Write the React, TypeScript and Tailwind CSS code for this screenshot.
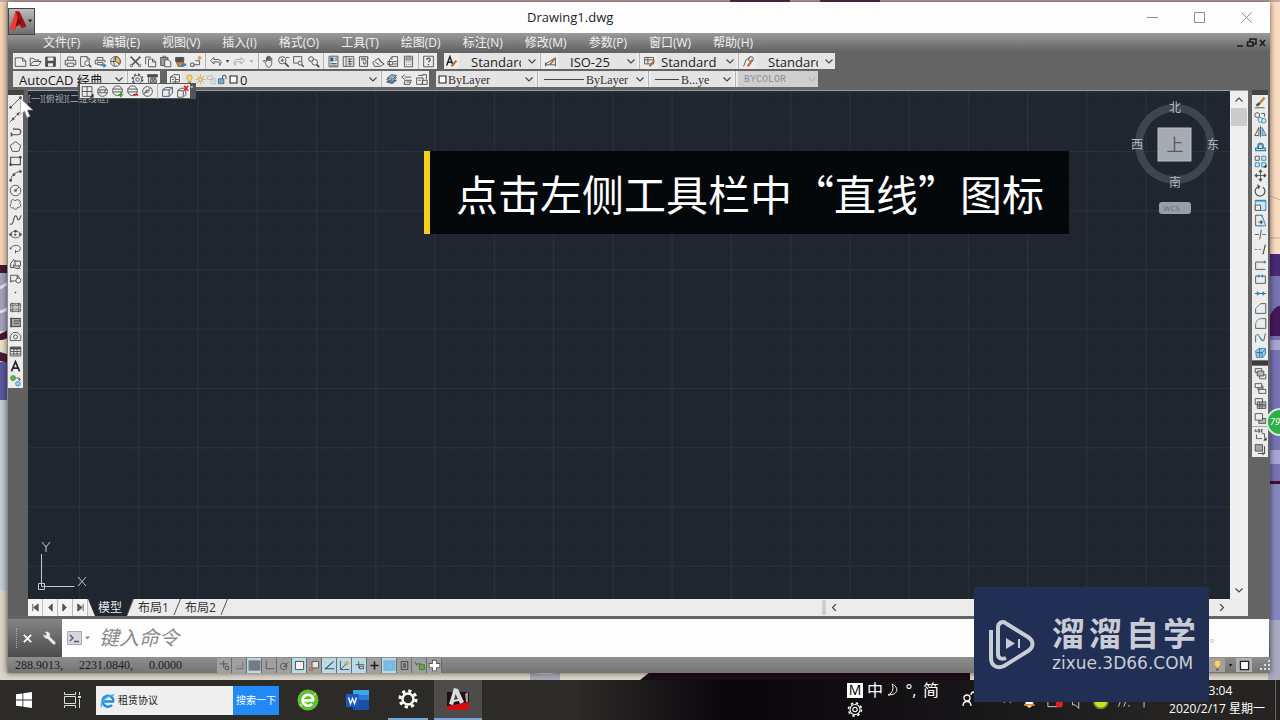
import React, { useState } from "react";
import clsx from "clsx";

const ink = "#4f4f4f";
const blue = "#2f86b8";

// every toolbar glyph is drawn on a 16x16 box
const glyphs: Record<string, React.ReactNode> = {
  new: <path d="M1.5 3.5h9l4 4v6.5h-13zM10.5 3.5v4h4" />,
  open: <path d="M1.5 13V4h4l1.5 2h5v2M1.5 13l3.5-5h10l-3.5 5z" />,
  save: (
    <>
      <path d="M2 2.5h12v11.5H2z" fill={ink} />
      <path d="M4.5 3h7v4h-7zM5 10h6v4H5z" fill="#eee" stroke="none" />
    </>
  ),
  print: <path d="M4.5 6V2.5h7V6M3.5 12H1.5V6.5h13V12h-2M4 10h8v4H4z" />,
  preview: (
    <>
      <path d="M7 14H2V2h8l3 3v2M10 2v3h3" />
      <circle cx="10" cy="10" r="3" />
      <path d="M12 12l3 3" strokeWidth="2" />
    </>
  ),
  publish: (
    <>
      <path d="M4 6V3h7v3M3 11H1.500V6.500h12V9M4 9h7v3H4z" />
      <path d="M8 13h6M12 11l3 2-3 2z" stroke={blue} fill={blue} />
    </>
  ),
  globe: (
    <>
      <circle cx="8" cy="8" r="6" />
      <path d="M8 8V2a6 6 0 0 1 5 9z" fill="#e6c24a" />
      <path d="M2 8h6M8 14c-3-3-3-9 0-12" />
    </>
  ),
  cut: (
    <>
      <path d="M2 2l10 10M14 2L4 12" strokeWidth="1.8" />
      <circle cx="3" cy="13" r="1.500" />
      <circle cx="13" cy="13" r="1.500" />
    </>
  ),
  copy: <path d="M2 11.500v-9h6.500M5.500 5h5l4 3.500V14.500h-9zM10.500 5v3.500h4" />,
  paste: (
    <>
      <path d="M2 3h9v10H2z" fill="#9a9a9a" />
      <path d="M5 1.500h3v2H5zM7 6h5l2.500 2.500v6H7z" fill="#eee" />
    </>
  ),
  match: (
    <>
      <path d="M2 3h10v5H2z" fill={ink} />
      <path d="M3 9h9v5H5z" fill="#c58a4f" stroke="#8a5b2c" />
      <path d="M9 12h6" stroke={blue} strokeWidth="3" />
    </>
  ),
  block: (
    <>
      <path d="M2 14v-4h4v4zM6 12h7V7H8" />
      <path d="M13 1v5M10.500 3.500h5M11 2l4 3M15 2l-4 3" stroke="#e09b2d" />
    </>
  ),
  undo: <path d="M6 3L2 7l4 4V8.500h5c2 0 3 1.500 2 4.500 3-3 2-7.500-2-7.500H6z" />,
  redo: (
    <path
      stroke="#a5a5a5"
      d="M10 3l4 4-4 4V8.500H5c-2 0-3 1.500-2 4.500-3-3-2-7.500 2-7.500h5z"
    />
  ),
  pan: (
    <path d="M4.500 10L1.500 7.500l1-1 3 1.500V3h1.500v4-5.500h1.500V7 2h1.500v5.500V4H12v6c0 3-2 5-4 5s-3-2-3.500-5z" />
  ),
  zoomRt: (
    <>
      <circle cx="6.500" cy="6.500" r="4.500" />
      <path d="M10 10l4.500 4.500" strokeWidth="2.200" />
      <path d="M4.500 6.500h4M6.500 4.500v4M11 3h4" />
    </>
  ),
  zoomWin: (
    <>
      <path d="M2 2h10v8H2z" />
      <circle cx="10" cy="10" r="2.500" fill="#eee" />
      <path d="M12 12l2.500 2.500" strokeWidth="2" />
    </>
  ),
  zoomPrev: (
    <>
      <circle cx="5" cy="5" r="3" />
      <circle cx="9.500" cy="9" r="3.500" fill="#eee" />
      <path d="M12 12l3 3" strokeWidth="2.200" />
    </>
  ),
  props: (
    <>
      <path d="M2.500 1.500h11v13h-11z" />
      <path d="M4 3h4v5H4z" fill="#2d5f9e" stroke="none" />
      <path d="M9.500 4h3M9.500 6.500h3M4 10.500h8M4 12.500h8" />
    </>
  ),
  dc: <path d="M1.500 2h13v12h-13zM5 2v12M7 5h6M7 8h6M7 11h6M9.500 4v9" />,
  palette: <path d="M3 2h10v12H3zM5 4h6M5 6h6v5H8V8M13 3l1.500 1" />,
  sheet: <path d="M1 9l7-5 2 4 5 3-5 3H3zM8 4l5 6M4 9l5 3" />,
  markup: <path d="M3 6l3-4h7v12H3zM6 2v4M1 8h6v4H1zM8 8h4M8 11h4" />,
  calc: <path d="M3 1.500h10v13H3zM5 3.500h6v2.500H5zM5 8.500h1M8 8.500h1M10.500 8.500h1M5 11.500h1M8 11.500h1M10.500 11.500h1" />,
  help: (
    <>
      <path d="M2 1.500h12v13H2z" />
      <path d="M6 6c0-3 4.500-2.500 4 0 0 1.200-2 1.500-2 3M8 11v1.500" strokeWidth="1.600" />
    </>
  ),
  textStyle: (
    <>
      <path d="M2 13L6 2l4 11M3.500 9h5" strokeWidth="1.800" stroke="#222" />
      <path d="M8 14l6-7" stroke="#b36b3a" strokeWidth="2.500" />
    </>
  ),
  dimStyle: (
    <>
      <path d="M1 12h13M2 9v5M14 3v11M2 11l11-7" />
      <path d="M7 12l7-8" stroke="#b36b3a" strokeWidth="2.200" />
    </>
  ),
  tableStyle: (
    <>
      <path d="M2 3h11v8H2zM2 6h11M6 3v8" />
      <path d="M8 14l6-7" stroke="#b36b3a" strokeWidth="2.500" />
    </>
  ),
  leader: (
    <>
      <path d="M2 14l3-8 5-3" />
      <circle cx="11" cy="5" r="3" />
      <path d="M7 14l6-8" stroke="#b36b3a" strokeWidth="2.500" />
    </>
  ),
  gear: (
    <>
      <circle cx="8" cy="8" r="2.200" />
      <circle cx="8" cy="8" r="5" />
      <circle cx="8" cy="8" r="6.500" strokeDasharray="2.500 2.600" strokeWidth="1.600" />
    </>
  ),
  wsGear: (
    <>
      <path d="M2 2h12v3H2z" fill={ink} />
      <circle cx="9" cy="10" r="4" fill="#aaa" />
      <path d="M3 6v8M6 6l7 8M12 6l-7 8" />
    </>
  ),
  layers: <path d="M3 5l4-3h7v9H7M3 5h6v9H3zM5 8h2M5 11h2M9 8h4" />,
  layerStack: (
    <>
      <path d="M2 11l5-3 7 1-5 4z" fill="#4f86b5" />
      <path d="M2 8l5-3 7 1-5 4z" fill="#cfe1ee" />
      <path d="M3 6l5-4 6 1-5 5z" fill="#8fb8d6" />
    </>
  ),
  layerPrev: <path d="M6 5h8M6 9h8l-2 5H5zM6 2L2 5l4 3M8 11h4" />,
  layerState: <path d="M4 3h6M2 6h8l-1 8H2zM9 2h5v6M9 9h6v5H9zM4 9h3" />,
  bulb: (
    <>
      <path d="M8 1.500a4 4 0 0 0-2 7.500v2h4V9a4 4 0 0 0-2-7.500z" fill="#f6d679" stroke="#c79a35" />
      <path d="M6.500 13h3" strokeWidth="2" />
    </>
  ),
  sun: (
    <>
      <circle cx="8" cy="8" r="3" fill="#f6d679" stroke="#c9942b" />
      <path d="M8 1v2.500M8 12.500V15M1 8h2.500M12.500 8H15M3 3l2 2M11 11l2 2M13 3l-2 2M5 11l-2 2" stroke="#c9942b" />
    </>
  ),
  vpFreeze: <path d="M2 3h8v5H2zM7 7h7v7H7zM9 10h3" stroke="#b5b5b5" />,
  lock: (
    <>
      <path d="M2 7h8v7H2z" fill="#7fa9cf" stroke="#2d5f8a" />
      <path d="M8 7V4c0-3 5-3 5 0v3" stroke="#2d5f8a" strokeWidth="1.600" />
    </>
  ),
  swatch: <path d="M3 3h10v10H3z" fill="#fff" stroke="#222" strokeWidth="1.600" />,
  // draw toolbar
  line: (
    <>
      <path d="M2 14L14 2" />
      <path d="M1 13h2v2H1zM13 1h2v2h-2z" fill={ink} />
    </>
  ),
  xline: (
    <>
      <path d="M1 15L15 1" strokeDasharray="5 1.500" />
      <path d="M4 10h2v2H4zM10 4h2v2h-2z" fill={ink} />
    </>
  ),
  pline: <path d="M2 12h9a3.500 3.500 0 0 0 0-7H7M2 9.500L4.500 12 2 14M6 3.500v3" strokeWidth="1.400" />,
  polygon: <path d="M8 2l6.500 4.800L12 14H4L1.500 6.800z" />,
  rect: (
    <>
      <path d="M2 4h12v9H2z" strokeWidth="1.400" />
      <path d="M1 12h2v2H1zM13 3h2v2h-2z" fill={ink} />
    </>
  ),
  arc: (
    <>
      <path d="M2 14C3 8 7 4 14 3" />
      <path d="M1 13h2v2H1zM5 6h2v2H5zM13 2h2v2h-2z" fill={ink} />
    </>
  ),
  circle: (
    <>
      <circle cx="8" cy="8" r="6.500" />
      <path d="M8 8l4-4M7 7h2v2H7z" />
    </>
  ),
  cloud: <path d="M7.500 3.500c-2-3-7-1-4.500 3-3 2-1 7 2.500 5.500 2 3.500 5 2 5-.5 4 1 5-3.500 2.500-5C16 3 10 .5 7.500 3.500z" />,
  spline: <path d="M1 13c3 3 4-2 5-6s3-5 4-1 3 3 5-3" strokeWidth="1.300" />,
  ellipse: (
    <>
      <ellipse cx="8" cy="8" rx="6" ry="4" />
      <path d="M1 7h2v2H1zM7 3h2v2H7zM13 7h2v2h-2zM7 7.500h1.500v1.500H7z" fill={ink} />
    </>
  ),
  ellArc: <path d="M2 9C1 4 14 2 14 8c0 3-3 4-6 4M8 10v4M3 7L2 9l-1-2" />,
  insert: <path d="M2 8l4-5 3 3M2 8v5h4V9M7 5h7v6H8zM11 11l3 3M5 10l3 4h5" strokeWidth="1.200" />,
  makeBlock: (
    <>
      <path d="M2 4h9v7H2z" />
      <circle cx="11.500" cy="10.500" r="3" fill="#eee" />
      <path d="M1 12h3M9 6h4" />
    </>
  ),
  point: <path d="M7.500 7.500h1v1h-1z" fill={ink} />,
  hatch: <path d="M2 3h12v10H2zM1 5h14M1 11h14M4 2v12M12 2v12M4 11l8-7M4 8l4-4M8 11l4-4" strokeWidth=".9" />,
  gradient: (
    <>
      <path d="M2 3h12v10H2z" fill="#a2a2a2" />
      <path d="M1 3h14M1 13h14M3 2v12M6 6h8M6 9h6" />
    </>
  ),
  region: (
    <>
      <path d="M1.500 13V7l4-4h5l4 4v6z" />
      <circle cx="8" cy="8.500" r="2.500" />
    </>
  ),
  table: (
    <>
      <path d="M1.500 2.500h13v11h-13zM1.500 8h13M1.500 11h13M6 5v8M10 5v8" />
      <path d="M2 3h12v2H2z" fill={ink} />
    </>
  ),
  mtext: <path d="M3 14L8 2l5 12M5 10h6" stroke="#222" strokeWidth="2" />,
  addSel: (
    <>
      <circle cx="5" cy="5" r="3" fill="#6bb04c" stroke="#4c8433" />
      <circle cx="11" cy="12" r="2.800" fill="#9fd0ec" stroke={blue} />
      <path d="M9 5h4v3M11.500 6.500L13 8l1.500-1.500" />
    </>
  ),
  // modify toolbar
  erase: (
    <>
      <path d="M5 11L13 2" stroke="#c48a3f" strokeWidth="3" />
      <path d="M3 12l4-3" strokeWidth="3" />
      <path d="M1 14.500h12" />
    </>
  ),
  copyObj: (
    <>
      <circle cx="4" cy="5" r="3" />
      <circle cx="8" cy="11" r="3" stroke={blue} />
      <circle cx="12" cy="12" r="2.800" stroke={blue} fill="#cde6f3" />
      <path d="M9 3h4v4" />
    </>
  ),
  mirror: (
    <>
      <path d="M6 3v10H1z" />
      <path d="M10 3v10h5z" stroke={blue} fill="#9fcbe3" />
      <path d="M8 1v14" />
    </>
  ),
  offset: (
    <>
      <path d="M2 13h12v-3h-3c3-8-9-8-6 0H2z" stroke={blue} fill="#cde6f3" strokeWidth="1.600" />
      <path d="M5.500 10.500h5C12 4 4 4 5.500 10.500z" />
    </>
  ),
  array: (
    <>
      <path d="M1.500 1.500h5v5h-5z" />
      <path d="M9.500 1.500h5v5h-5zM1.500 9.500h5v5h-5zM9.500 9.500h5v5h-5z" stroke={blue} fill="#cde6f3" />
      <path d="M15 12v3h-3z" fill="#222" />
    </>
  ),
  move: (
    <path d="M8 1v14M1 8h14M6 3.500L8 1l2 2.500zM6 12.500L8 15l2-2.500zM3.500 6L1 8l2.500 2zM12.500 6L15 8l-2.500 2z" fill={ink} />
  ),
  rotate: <path d="M6 3a6 6 0 1 0 5 1M4 1l3 2-2 3" strokeWidth="1.400" />,
  scale: (
    <>
      <path d="M1.500 2h13v12h-13z" stroke={blue} fill="#cde6f3" />
      <path d="M1.500 7.500H8V14H1.500z" fill="#eee" />
      <path d="M1.500 2h13" stroke={blue} strokeWidth="2" />
    </>
  ),
  stretch: (
    <>
      <path d="M2 1.500h8v13H2z" />
      <path d="M10 2l4.500 12.500H6" stroke={blue} fill="#cde6f3" />
      <path d="M5 10h5M8.500 8l2 2-2 2z" fill={ink} />
    </>
  ),
  trim: (
    <>
      <path d="M1 8h5M9 2L7 14" />
      <path d="M10 8h5" stroke={blue} />
    </>
  ),
  extend: (
    <>
      <path d="M1 8h3M6 8h3" stroke={blue} />
      <path d="M14 2l-3 12" strokeWidth="1.400" />
    </>
  ),
  breakPt: (
    <>
      <path d="M2 14V5h9M2 14h12" />
      <path d="M12 4h2v2h-2z" fill={blue} stroke={blue} />
    </>
  ),
  breakIt: (
    <>
      <path d="M6 5H2v9h12V5h-4" />
      <path d="M5 4h2v2H5zM9 4h2v2H9z" fill={blue} stroke={blue} />
    </>
  ),
  join: (
    <>
      <path d="M1 8h14" />
      <path d="M4 6l3 2-3 2zM12 6L9 8l3 2z" fill={blue} stroke={blue} />
    </>
  ),
  chamfer: (
    <>
      <path d="M2 8v6h12.500V2H8" />
      <path d="M2 8l6-6" stroke={blue} />
    </>
  ),
  fillet: (
    <>
      <path d="M2 10v4h12.500V2H10" />
      <path d="M2 10c0-5 3-8 8-8" stroke={blue} />
    </>
  ),
  blend: (
    <>
      <path d="M2 14V6l2-2M12 12l2-9" />
      <path d="M4 4c3 0 3 8 8 8" stroke={blue} strokeWidth="1.400" />
    </>
  ),
  explode: (
    <>
      <path d="M2 6l4-3h8v7l-3 4H3z" stroke={blue} fill="#9fcbe3" />
      <path d="M3 8h7v5M10 8l4-4M7 3v10" stroke="#1d6d9c" />
    </>
  ),
  front: (
    <>
      <path d="M1.500 2h8v5h-8zM7 9.500h7.500v5H7z" />
      <path d="M4 5h8v6H4z" fill="#b5b5b5" />
    </>
  ),
  back: (
    <>
      <path d="M5 5h6v5H5z" fill="#b5b5b5" />
      <path d="M1.500 2h8v5h-8zM6 9h8.500v5H6z" fill="#eee" />
    </>
  ),
  above: (
    <>
      <path d="M1.500 2h9v7h-9z" />
      <path d="M4 6h10.500v8H4zM4 9h10M4 11h10M7 6v8M10 6v8" fill="#c9c9c9" />
    </>
  ),
  under: (
    <>
      <path d="M6 8h8.500v6H6z" fill="#b5b5b5" />
      <path d="M1.500 2h9v8h-9z" fill="#eee" />
    </>
  ),
  textFront: (
    <>
      <path d="M1 5l1-3 1 3M5 2v3h2V2zM11 2H9v3h2" strokeWidth="1.200" />
      <path d="M3 8v5h7M10 7h3v6" />
      <path d="M15 12v3h-3z" fill="#222" />
    </>
  ),
  hatchBack: (
    <>
      <path d="M1.500 2h9v8h-9z" fill="#a5a5a5" />
      <path d="M13 4v9h-2M5 13h6M11 11v4" strokeWidth="1.300" />
    </>
  ),
  // viewport toolbar
  vports: (
    <>
      <path d="M1.500 2h12v12h-12zM7.500 2v12M1.500 8h12" />
      <path d="M15 11v4h-4z" fill="#222" />
    </>
  ),
  sphere: (
    <>
      <circle cx="8" cy="8" r="6" />
      <path d="M2 6h12M2 9.500h12M5 6v3M11 6v3" />
    </>
  ),
  sphereAdd: (
    <>
      <circle cx="8" cy="7" r="6" />
      <path d="M2 5h12M2 8.500h12" />
      <path d="M9 12h6M12 9v6" stroke="#3d9b35" strokeWidth="2" />
    </>
  ),
  sphereSub: (
    <>
      <circle cx="8" cy="7" r="6" />
      <path d="M2 5h12M2 8.500h12" />
      <path d="M9 12h6" stroke="#c22" strokeWidth="2.200" />
    </>
  ),
  sphereCut: (
    <>
      <circle cx="8" cy="8" r="6" />
      <path d="M3 12l9-9M5 7h6M4 9h5" />
    </>
  ),
  cube: <path d="M2 6l4-3h8v7l-4 4H2zM2 6h8v8M10 6l4-3" stroke="#3f4e66" />,
  cubeDel: (
    <>
      <path d="M2 7l4-3h6v8l-3 3H2zM2 7h7v7" />
      <path d="M10 1l5 6M15 1l-5 6" stroke="#d22" strokeWidth="2" />
    </>
  ),
  // status bar
  infer: <path d="M7 2v9M2 6h10M9 9h4v4H9z" />,
  snap: <path d="M3 12h9V4M5 9h1M8 9h1" stroke="#666" />,
  grid: <path d="M1 2h14v12H1z" fill="#77797f" stroke="#8d8f96" />,
  ortho: <path d="M4 2v10h10" stroke="#555" />,
  polar: (
    <>
      <circle cx="7" cy="9" r="4" />
      <path d="M7 9l6-5M7 9h4" />
    </>
  ),
  osnap: <path d="M3 3h10v10H3z" fill="#f5f5f5" strokeWidth="1.200" />,
  osnap3d: (
    <>
      <path d="M5 3h8v8H5z" fill="#e5e5e5" />
      <path d="M2 11h4v3H2z" stroke="#b06030" />
    </>
  ),
  otrack: <path d="M13 3L3 12h11" strokeWidth="1.300" />,
  ducs: (
    <>
      <path d="M3 2v11h11M3 13l7-7" />
      <path d="M11 2v6M8 5h6" stroke="#e09b2d" strokeWidth="1.500" />
    </>
  ),
  dyn: <path d="M7 3v8M3 7h11M8 9h5v3H8z" />,
  lwt: <path d="M8 3v10M3 8h10" strokeWidth="2" stroke="#222" />,
  transp: <path d="M1 2h14v12H1zM4 4h8v8H4z" fill="#7ec0e6" stroke="#5aa5d0" strokeDasharray="1 1" />,
  qp: <path d="M4 3h8v10H4zM7 6h2v4H7z" strokeWidth="1.300" />,
  cycle: (
    <>
      <path d="M2 3l3 5M4 6h6" />
      <path d="M8 7h6v6H8z" fill="#69a94e" stroke="#3f7a2a" />
    </>
  ),
  monitor: (
    <>
      <path d="M8 1v14M1 8h14" strokeWidth="6" />
      <path d="M8 2v12M2 8h12" stroke="#fff" strokeWidth="4" />
    </>
  ),
};

function Glyph({ name, className = "h-[13px] w-[13px]" }: { name: string; className?: string }) {
  return (
    <svg viewBox="0 0 16 16" className={className} fill="none" stroke={ink} strokeWidth="1.100">
      {glyphs[name]}
    </svg>
  );
}

function Chevron({ className }: { className?: string }) {
  return (
    <svg viewBox="0 0 8 5" className={clsx("h-[5px] w-2", className)} fill="none" stroke="currentColor" strokeWidth="1.100">
      <path d="M.5.5L4 4 7.500.5" />
    </svg>
  );
}

const Tool = ({ name }: { name: string }) => (
  <button aria-label={name} className="flex h-4 w-[15px] shrink-0 items-center justify-center hover:bg-sky-100">
    <Glyph name={name} />
  </button>
);

const Sep = () => <span className="mx-[2px] h-4 w-px shrink-0 bg-[#b4b4b4]" />;

const VTool = ({ name }: { name: string }) => (
  <button aria-label={name} className="flex w-full flex-1 items-center justify-center hover:bg-sky-100">
    <Glyph name={name} />
  </button>
);

function Combo({ label, value, className, selectClass, disabled, children }: {
  label: string;
  value: string;
  className: string;
  selectClass: string;
  disabled?: boolean;
  children?: React.ReactNode;
}) {
  return (
    <div className={clsx("relative flex h-4 shrink-0 items-center", disabled ? "bg-[#cfcfcf]" : "bg-[#e4e4e4]", className)}>
      {children}
      <select
        aria-label={label}
        disabled={disabled}
        className={clsx("h-4 min-w-0 flex-1 appearance-none overflow-hidden bg-transparent outline-none", selectClass)}
      >
        <option>{value}</option>
      </select>
      <Chevron className={clsx("pointer-events-none absolute right-[2px]", disabled ? "text-[#b5b5b5]" : "text-[#444]")} />
    </div>
  );
}

const menus = [
  "文件(F)", "编辑(E)", "视图(V)", "插入(I)", "格式(O)", "工具(T)",
  "绘图(D)", "标注(N)", "修改(M)", "参数(P)", "窗口(W)", "帮助(H)",
];

const standardTools = [
  ["new", "open", "save"],
  ["print", "preview", "publish", "globe"],
  ["cut", "copy", "paste", "match", "block"],
  ["undo", "redo"],
  ["pan", "zoomRt", "zoomWin", "zoomPrev"],
  ["props", "dc", "palette", "sheet", "markup", "calc"],
  ["help"],
];

const drawTools = [
  "line", "xline", "pline", "polygon", "rect", "arc", "circle", "cloud", "spline", "ellipse",
  "ellArc", "insert", "makeBlock", "point", "hatch", "gradient", "region", "table", "mtext", "addSel",
];

const modifyTools = [
  "erase", "copyObj", "mirror", "offset", "array", "move", "rotate", "scale", "stretch",
  "trim", "extend", "breakPt", "breakIt", "join", "chamfer", "fillet", "blend", "explode",
];

const statusTools = [
  { name: "infer" }, { name: "snap" }, { name: "grid", on: true }, { name: "ortho" }, { name: "polar" },
  { name: "osnap", on: true }, { name: "osnap3d" }, { name: "otrack", on: true }, { name: "ducs", on: true },
  { name: "dyn", on: true }, { name: "lwt" }, { name: "transp", on: true }, { name: "qp" }, { name: "cycle" },
  { name: "monitor" },
];

const tools = "flex h-4 shrink-0 items-center bg-[#ececec]";
const ui = "font-['Open_Sans','Noto_Sans_CJK_SC',sans-serif]";

function Wallpaper() {
  return (
    <svg className="absolute inset-0 h-full w-full" viewBox="0 0 1280 720" preserveAspectRatio="none">
      <rect width="1280" height="720" fill="#dcd6c8" />
      <rect width="10" height="270" fill="#f5d5b4" />
      <rect y="265" width="10" height="8" fill="#4a1830" />
      <rect y="273" width="10" height="58" fill="#a5a1ba" />
      <path d="M0 288l10-6M0 312l10-4" stroke="#e8e0e8" strokeWidth="3" />
      <path d="M0 334l10-5v8l-10 4z" fill="#4a1830" />
      <rect y="340" width="10" height="16" fill="#eadfc8" />
      <path d="M0 352l10 3v8l-10-2z" fill="#4a1830" />
      <rect y="362" width="10" height="38" fill="#5a56a0" />
      <rect y="400" width="10" height="190" fill="#c3cbd6" />
      <rect x="1268" width="12" height="256" fill="#fbdcc0" />
      <path d="M1268 196c5 0 9 3 12 4M1268 238h12" stroke="#c9ab96" fill="none" />
      <rect x="1268" y="254" width="12" height="230" fill="#7872b4" />
      <rect x="1268" y="254" width="12" height="22" fill="#4a2a78" />
      <path d="M1268 320c4-10 8-14 12-14v30h-12z" fill="#451a5c" />
      <path d="M1268 340h12v10h-12zM1268 450h12v14h-12z" fill="#a9a6d4" />
      <rect x="1268" y="481" width="12" height="3" fill="#3b1238" />
      <rect x="1268" y="484" width="12" height="200" fill="#8487bc" />
      <rect x="1268" y="620" width="12" height="60" fill="#a9a9c0" />
      <rect width="1280" height="2" fill="#c9a9a4" />
      <path d="M730 0h60v2h-60zM820 0h60v2h-60z" fill="#55304e" />
      <path d="M530 672c10 3 20 3 30 0v8h-30z" fill="#a9a8b8" />
      <path d="M650 672h320v8H640z" fill="#1c0c16" />
    </svg>
  );
}

function ViewCube() {
  return (
    <div className="absolute right-[7px] top-2 flex w-24 flex-col items-center">
      <svg viewBox="0 0 96 96" className="h-24 w-24">
        <circle cx="48" cy="45" r="36" fill="none" stroke="#3d4551" strokeWidth="8" />
        <rect x="31" y="29" width="33" height="33" fill="#a6aab1" stroke="#b9bcc2" />
        <g fill="#b4b8be" fontFamily="'Noto Sans CJK SC', sans-serif" fontSize="12" textAnchor="middle">
          <text x="48" y="13">北</text>
          <text x="48" y="88">南</text>
          <text x="10" y="50">西</text>
          <text x="86" y="50">东</text>
          <text x="48" y="52" fontSize="17" fill="#555b66">上</text>
        </g>
      </svg>
      <button className="mt-[7px] h-3 w-8 rounded-[3px] bg-[#9a9ea6] pl-1 text-left text-[8px] leading-3 text-[#666c76]">
        WCS
      </button>
    </div>
  );
}

function Canvas() {
  return (
    <main className="relative min-w-0 flex-1 overflow-hidden bg-[#1f2630]">
      <svg className="absolute inset-0 h-full w-full">
        <defs>
          <pattern id="minor" x="4" y="1" width="11.850" height="11.850" patternUnits="userSpaceOnUse">
            <path d="M.5 0v12M0 .5h12" stroke="#212832" />
          </pattern>
          <pattern id="major" x="51" y="60" width="59.250" height="59.250" patternUnits="userSpaceOnUse">
            <path d="M.5 0v60M0 .5h60" stroke="#2a323d" />
          </pattern>
        </defs>
        <rect width="100%" height="100%" fill="url(#minor)" />
        <rect width="100%" height="100%" fill="url(#major)" />
      </svg>
      <span className="absolute left-0 top-[2px] text-[9px] leading-3 text-[#a9aeb6]">[一][俯视][二维线框]</span>
      <svg className="absolute bottom-[3px] left-[9px] h-[60px] w-14" fill="none" stroke="#c5c9ce">
        <path d="M4.500 18v32.500h33M1.500 47.500h6v6h-6z" />
        <path d="M5 6l4 5 4-5M9 11v5M41 41l8 9M49 41l-8 9" />
      </svg>
      <ViewCube />
    </main>
  );
}

function Ribbon() {
  const styleText = "text-[13px] text-[#1c1c1c] pr-[17px]";
  const layerText = "text-[12px] text-[#333] pr-3";
  return (
    <div className="flex flex-col gap-[2px] bg-[#646464] pb-[3px] pl-[5px] pt-px">
      <div className="flex gap-[7px]">
        <div className={clsx(tools, "w-[424px]")}>
          {standardTools.map((group, i) => (
            <React.Fragment key={i}>
              {i > 0 && <Sep />}
              {group.map((name) => (
                <React.Fragment key={name}>
                  <Tool name={name} />
                  {(name === "undo" || name === "redo") && (
                    <span className={clsx("w-[9px] text-center text-[6px]", name === "undo" ? "text-[#333]" : "text-[#aaa]")}>▾</span>
                  )}
                </React.Fragment>
              ))}
            </React.Fragment>
          ))}
        </div>
        <div className={tools}>
          <Tool name="textStyle" />
          <Combo label="文字样式" value="Standard" className="w-[79px]" selectClass={clsx(styleText, "pl-3")} />
          <Sep />
          <Tool name="dimStyle" />
          <Combo label="标注样式" value="ISO-25" className="w-[79px]" selectClass={clsx(styleText, "pl-3")} />
          <Sep />
          <Tool name="tableStyle" />
          <Combo label="表格样式" value="Standard" className="w-[79px]" selectClass={clsx(styleText, "pl-1")} />
          <Sep />
          <Tool name="leader" />
          <Combo label="多重引线样式" value="Standard" className="w-[79px]" selectClass={clsx(styleText, "pl-3")} />
        </div>
      </div>
      <div className="flex gap-[7px]">
        <div className={clsx(tools, "w-[147px]")}>
          <Combo label="工作空间" value="AutoCAD 经典" className="w-[112px]" selectClass="pl-[6px] pr-3 text-[13px] text-[#1c1c1c]" />
          <Sep />
          <Tool name="gear" />
          <Tool name="wsGear" />
        </div>
        <div className={clsx(tools, "w-[262px]")}>
          <Tool name="layers" />
          <Combo label="图层" value="0" className="w-[197px] pl-[2px]" selectClass="pl-px pr-3 text-[13px] text-[#1c1c1c]">
            <Glyph name="bulb" className="h-[11px] w-[11px] shrink-0" />
            <Glyph name="sun" className="h-[11px] w-[11px] shrink-0" />
            <Glyph name="vpFreeze" className="h-[11px] w-[11px] shrink-0" />
            <Glyph name="lock" className="h-[11px] w-[11px] shrink-0" />
            <Glyph name="swatch" className="h-[11px] w-[11px] shrink-0" />
          </Combo>
          <Sep />
          <Tool name="layerStack" />
          <Tool name="layerPrev" />
          <Tool name="layerState" />
        </div>
        <div className={clsx(tools, "font-['Liberation_Serif',serif]")}>
          <Combo label="颜色" value="ByLayer" className="w-[99px] pl-px" selectClass={layerText}>
            <Glyph name="swatch" className="h-[11px] w-[11px]" />
          </Combo>
          <Sep />
          <Combo label="线型" value="ByLayer" className="w-[106px] pl-1" selectClass={clsx(layerText, "pl-[2px]")}>
            <span className="h-px w-10 bg-[#444]" />
          </Combo>
          <Sep />
          <Combo label="线宽" value="B...ye" className="w-[82px] pl-1" selectClass={clsx(layerText, "pl-[2px]")}>
            <span className="h-px w-6 bg-[#444]" />
          </Combo>
          <Sep />
          <Combo
            label="打印样式"
            value="BYCOLOR"
            disabled
            className="w-20"
            selectClass="pl-[6px] pr-3 font-['Liberation_Mono',monospace] text-[10px] text-[#8f8f8f]"
          />
        </div>
      </div>
    </div>
  );
}

function Tabs() {
  const [active, setActive] = useState("模型");
  return (
    <div className="flex h-[17px] items-stretch bg-[#ececec]">
      {["M3 1v8M9 1L4 5l5 4z", "M8 1L4 5l4 4z", "M3 1l4 4-4 4z", "M9 1v8M3 1l5 4-5 4z"].map((d, i) => (
        <button key={d} aria-label={`tab-${i}`} className="flex w-[15px] items-center justify-center border-r border-[#bbb] bg-[#f4f4f4]">
          <svg viewBox="0 0 11 10" className="h-[9px] w-[10px]" fill="#555" stroke="#555">
            <path d={d} />
          </svg>
        </button>
      ))}
      {["模型", "布局1", "布局2"].map((tab) => (
        <div key={tab} className={clsx("flex", active === tab && "bg-[#1f2630]")}>
          {active === tab && (
            <svg viewBox="0 0 8 17" className="h-[17px] w-2" fill="#ececec">
              <path d="M0 0l7 17H0z" />
            </svg>
          )}
          <button
            onClick={() => setActive(tab)}
            className={clsx("px-[2px] text-[12px] leading-[17px]", active === tab ? "text-[#e8e8e8]" : "text-[#333]")}
          >
            {tab}
          </button>
          <svg viewBox="0 0 12 17" className="h-[17px] w-3">
            {active === tab && <path d="M9 0h3v17H3z" fill="#ececec" />}
            <path d="M9.500 0L3 16" stroke="#555" />
          </svg>
        </div>
      ))}
      <div className="ml-auto flex w-[426px] items-center justify-between pr-[22px] text-[#444]">
        <span className="h-[15px] w-1 bg-[#cfcfcf]" />
        <Chevron className="ml-1 mr-auto rotate-90" />
        <Chevron className="-rotate-90" />
      </div>
    </div>
  );
}

function AppWindow() {
  return (
    <div className={clsx("relative flex min-h-0 flex-1 flex-col border-l border-[#8a8a8a] bg-[#646464] shadow-[0_0_6px_rgba(0,0,0,0.6)]", ui)}>
      <header className="flex h-[31px] shrink-0 items-center bg-[#fdfdfd]">
        <button aria-label="应用程序菜单" className="z-10 mt-2 flex h-[27px] w-[27px] items-center border border-[#444] bg-linear-to-b from-[#bdbdbd] to-[#6e6e6e]">
          <svg viewBox="0 0 26 26" className="h-[25px] w-[25px]">
            <path d="M1 21L7 2l4 1 7 15-5 2-1-3-4 1-2 4z" fill="#c5161d" />
            <path d="M7 2l4 1 7 15-5 2z" fill="#a01016" />
            <path d="M1 21L7 2l2 8-3 12z" fill="#ee3b3b" />
            <path d="M8 17l1.500-6 2.500 5M9 14h2.500" fill="none" stroke="#5e0a0e" strokeWidth="1.500" />
            <path d="M20 11h4l-2 3z" fill="#222" />
          </svg>
        </button>
        <h1 className="ml-[492px] flex-1 text-[13px] text-[#1d1d1d]">Drawing1.dwg</h1>
        <div className="flex text-[#8d8d8d]">
          {["M0 5.500h11", "M.5.500h10v10H.5z", "M.5.500l10 10M10.500.500l-10 10"].map((d, i) => (
            <button key={d} aria-label={["最小化", "最大化", "关闭"][i]} className="flex h-7 w-[47px] items-center justify-center">
              <svg viewBox="0 0 11 11" className="h-[11px] w-[11px]" fill="none" stroke="currentColor">
                <path d={d} />
              </svg>
            </button>
          ))}
        </div>
      </header>

      <nav className="flex h-[19px] shrink-0 items-center gap-[22px] bg-linear-to-b from-[#9b9b9b] to-[#626262] pl-[35px] pr-1 text-[12px] text-[#f0f0f0]">
        {menus.map((menu) => (
          <button key={menu} className="shrink-0">{menu}</button>
        ))}
        <svg viewBox="0 0 30 10" className="ml-auto h-[10px] w-[30px]" fill="none" stroke="#1c1c1c" strokeWidth="1.500">
          <path d="M1 8h6M14 4V1h6v5h-3M11.500 4h5.500v4h-5.500zM24 2l5 6M29 2l-5 6" />
        </svg>
      </nav>

      <Ribbon />

      <div className="flex min-h-0 flex-1">
        <aside className="flex w-5 shrink-0 flex-col bg-[#606060]">
          <div className="h-[5px] w-4 bg-[#444]" />
          <div className="flex h-[293px] w-[15px] flex-col bg-[#ececec]">
            {drawTools.map((name) => <VTool key={name} name={name} />)}
          </div>
        </aside>
        <div className="flex min-w-0 flex-1 flex-col border-t border-[#98a19f]">
          <div className="flex min-h-0 flex-1">
            <Canvas />
            <div className="flex w-[18px] shrink-0 flex-col items-center justify-between bg-[#efefef] py-[6px] text-[#444]">
              <div className="flex flex-col items-center gap-[6px]">
                <Chevron className="rotate-180" />
                <span className="h-[18px] w-4 bg-[#cbcbcb]" />
              </div>
              <Chevron />
            </div>
          </div>
          <Tabs />
        </div>
        <aside className="flex w-[22px] shrink-0 flex-col pl-1">
          <div className="h-[5px] w-4 bg-[#444]" />
          <div className="flex h-[265px] w-4 flex-col bg-[#ececec]">
            {modifyTools.map((name) => <VTool key={name} name={name} />)}
          </div>
          <div className="h-[6px] w-4 border-y border-[#777] bg-[#3c3c3c]" />
          <div className="flex h-[60px] w-4 flex-col bg-[#ececec]">
            {["front", "back", "above", "under"].map((name) => <VTool key={name} name={name} />)}
          </div>
          <div className="flex h-[31px] w-4 flex-col border-t border-[#aaa] bg-[#ececec]">
            <VTool name="textFront" />
            <VTool name="hatchBack" />
          </div>
        </aside>
      </div>

      <div className="mt-[3px] flex h-[38px] shrink-0 items-center bg-linear-to-b from-[#858585] to-[#4c4c4c] pr-px">
        <div className="flex w-[54px] items-center gap-[10px] pl-[8px] text-white">
          <span className="-mr-1 h-5 border-l border-dotted border-[#aaa]" />
          <button aria-label="关闭命令行">
            <svg viewBox="0 0 10 10" className="h-[9px] w-[9px]" stroke="currentColor" strokeWidth="2">
              <path d="M1 1l8 8M9 1L1 9" />
            </svg>
          </button>
          <button aria-label="自定义">
            <svg viewBox="0 0 14 14" className="h-[14px] w-[14px]">
              <path d="M5 5l7 7" stroke="#ececec" strokeWidth="3" strokeLinecap="round" />
              <path d="M1 3l2.500 2L5 3.500 3 1c4-1 6 2 4.500 5S2 8 1 3z" fill="#ececec" />
            </svg>
          </button>
        </div>
        <label className="flex h-full flex-1 items-center bg-[#fdfdfd] pl-[5px]">
          <svg viewBox="0 0 32 16" className="h-4 w-8">
            <path d="M.5 1.500h14v13H.5z" fill="#d6d6e0" stroke="#a9a9b6" />
            <path d="M3 5l3 3-3 3M7 11.500h5" stroke="#555" strokeWidth="1.400" fill="none" />
            <path d="M18 6.500h5l-2.500 3z" fill="#888" />
          </svg>
          <input
            aria-label="命令行"
            placeholder="键入命令"
            className="w-1/2 bg-transparent text-[20px] italic outline-none placeholder:text-[#8a8a8a]"
          />
          <span className="ml-auto pr-12 text-[11px] text-[#aaa]">。</span>
        </label>
      </div>

      <footer className="flex h-4 shrink-0 items-center bg-linear-to-b from-[#8e8e8e] to-[#747474]">
        <div className="flex w-[209px] gap-4 pl-[7px] font-['Liberation_Serif',serif] text-[12px] leading-4 text-[#1c1c1c]">
          <span>288.9013,</span>
          <span>2231.0840,</span>
          <span>0.0000</span>
        </div>
        <div className="flex">
          {statusTools.map(({ name, on }) => (
            <button
              key={name}
              aria-label={name}
              className={clsx("flex h-[15px] w-[15px] items-center justify-center border-r border-[#6d6d6d]", on ? "bg-[#b9dbe9]" : "bg-[#a0a0a0]")}
            >
              <Glyph name={name} />
            </button>
          ))}
        </div>
        <div className="ml-auto flex items-center gap-1">
          <span className="flex h-[14px] w-4 items-center justify-center bg-[#a0a0a0]"><Glyph name="bulb" /></span>
          <span className="text-[6px] text-[#111]">▾</span>
          <span className="flex h-[14px] w-4 items-center justify-center bg-[#b0b0b0]"><Glyph name="swatch" /></span>
          <svg viewBox="0 0 10 10" className="ml-1 h-[10px] w-[10px]" fill="#ddd">
            <path d="M8 0h2v2H8zM8 4h2v2H8zM8 8h2v2H8zM4 4h2v2H4zM4 8h2v2H4zM0 8h2v2H0z" />
          </svg>
        </div>
      </footer>

      {/* floating viewport toolbar */}
      <div className="absolute left-[70px] top-[81px] flex h-[16px] items-center border border-[#555] bg-[#ececec]">
        <span className="h-full w-px bg-[#555]" />
        {["vports", "sphere", "sphereAdd", "sphereSub", "sphereCut"].map((name) => <Tool key={name} name={name} />)}
        <Sep />
        <Tool name="cube" />
        <Tool name="cubeDel" />
        <span className="h-full w-[5px] bg-[#555] text-[6px] leading-[6px] text-white">×</span>
      </div>
      <svg viewBox="0 0 13 20" className="absolute left-3 top-[96px] h-5 w-[13px]">
        <path d="M.5.500v16l4-3.500 2.500 6.500 3-1.200-2.800-6.300h5.500z" fill="#fff" stroke="#999" strokeWidth=".6" />
      </svg>
    </div>
  );
}

function Taskbar() {
  return (
    <div className={clsx("relative flex h-10 shrink-0 items-center bg-linear-to-r from-[#2d2b28] from-45% via-[#08060a] via-57% to-[#252423] to-90% text-white", ui)}>
      <button aria-label="开始" className="flex w-12 justify-center">
        <svg viewBox="0 0 16 16" className="h-4 w-4" fill="#fff">
          <path d="M0 2.300l6.500-.9v6.200H0zM7.300 1.300L16 0v7.600H7.300zM0 8.400h6.500v6.200L0 13.700zM7.300 8.400H16V16l-8.700-1.300z" />
        </svg>
      </button>
      <button aria-label="任务视图" className="flex w-12 justify-center">
        <svg viewBox="0 0 17 16" className="h-4 w-[17px]" fill="none" stroke="#ddd">
          <path d="M.5 0v2.500h11V0M.5 4.500h11v7H.5zM.5 16v-2.500h11V16M15.500 0v3M15.500 7v9" />
          <path d="M14 4h3v2h-3z" fill="#ddd" stroke="none" />
        </svg>
      </button>
      <form className="flex h-[29px] w-[183px] bg-[#efefef]" onSubmit={(e) => e.preventDefault()}>
        <svg viewBox="0 0 16 16" className="ml-1 mt-[7px] h-4 w-4 shrink-0" fill="none">
          <path d="M14 8.500H4M13.500 8.500a5.500 5.500 0 1 0-1.500 3.500" stroke="#1c8fe0" strokeWidth="2.500" />
          <path d="M2 14C-1 11 5 3 14 2" stroke="#3fb0f0" strokeWidth="1.300" />
        </svg>
        <input aria-label="搜索" defaultValue="租赁协议" className="min-w-0 flex-1 bg-transparent pl-[2px] text-[10px] text-[#222] outline-none" />
        <button className="w-[46px] bg-[#2389f5] text-[10px]">搜索一下</button>
      </form>
      <button aria-label="360浏览器" className="ml-1 flex w-[50px] justify-center">
        <svg viewBox="0 0 22 22" className="h-[22px] w-[22px]" fill="none">
          <circle cx="11" cy="11" r="10.500" fill="#62c12f" />
          <path d="M17 11.500H6M16.500 11.500A5.500 5.500 0 1 0 15 15" stroke="#fff" strokeWidth="2.600" />
          <path d="M2 16C6 18 15 10 19 4" stroke="#d8f4c4" />
        </svg>
      </button>
      <button aria-label="Word" className="flex w-[50px] justify-center">
        <svg viewBox="0 0 24 22" className="h-[22px] w-6">
          <path d="M7 1h16v20H7z" fill="#2b7cd3" />
          <path d="M7 1h16v5H7z" fill="#41a5ee" />
          <path d="M7 11h16v10H7z" fill="#1a4fa8" />
          <rect y="5" width="13" height="13" rx="1" fill="#1b5cbe" />
          <path d="M2.500 8.500l2 6 2-5 2 5 2-6" fill="none" stroke="#fff" strokeWidth="1.300" />
        </svg>
      </button>
      <button aria-label="设置" className="ml-[5px] flex h-full w-10 items-center justify-center border-b-2 border-[#76a9d9]">
        <svg viewBox="0 0 20 20" className="h-5 w-5" fill="none" stroke="#fff">
          <circle cx="10" cy="10" r="5.500" strokeWidth="2.400" />
          <circle cx="10" cy="10" r="8" strokeWidth="3" strokeDasharray="3.200 3.080" />
        </svg>
      </button>
      <button aria-label="AutoCAD" className="ml-[6px] flex h-full w-12 items-center justify-center border-b-2 border-[#76a9d9] bg-[#4d4c4b]">
        <svg viewBox="0 0 24 24" className="h-6 w-6">
          <path d="M1 5h22v18H1z" fill="#1a1113" />
          <path d="M1 23v-4l22-4v8z" fill="#d10f12" />
          <path d="M3 17L8 1l4 1 6 13-4 2-1-3-5 1-1 3z" fill="#dcdcdc" />
          <path d="M8 13l1.500-6 2.500 5z" fill="#444" />
          <path d="M19 7l3-2v10h-2z" fill="#999" />
        </svg>
      </button>

      {/* language bar */}
      <div className="absolute left-[847px] top-0 flex flex-col gap-px">
        <div className="flex h-5 items-center gap-1 text-[16px] leading-5">
          <span className="flex h-[15px] w-4 items-center justify-center bg-white text-[14px] text-black">M</span>
          <span>中</span>
          <svg viewBox="0 0 12 14" className="h-[14px] w-3" fill="none" stroke="#fff">
            <path d="M5 1c7 3 7 11-4 11 5-2 6-7 4-11z" />
          </svg>
          <span className="w-4 text-center">°,</span>
          <span>简</span>
        </div>
        <Glyph name="gear" className="h-[17px] w-4 brightness-0 invert" />
      </div>

      <svg viewBox="0 0 16 18" className="mb-1 ml-auto h-[18px] w-4" fill="none" stroke="#fff" strokeWidth="1.300">
        <circle cx="5" cy="9" r="3" />
        <path d="M1 17c0-6 8-6 8 0M9 6a3 3 0 1 1 3 3M12 9c2 0 3 2 3 4" />
      </svg>
      <svg viewBox="0 0 170 20" className="ml-6 mr-[14px] mt-2 h-5 w-[150px]" fill="none" stroke="#ddd">
        <path d="M2 9l4-4 4 4" />
        <path d="M27 3h8v8l-4 3-4-3z" fill="#fff" />
        <path d="M25 11h12" stroke="#e08a20" strokeWidth="2" />
        <path d="M52 4h12v9H52z" />
        <circle cx="65" cy="10" r="4" fill="#d22" stroke="none" />
        <path d="M80 7h3l4-4v12l-4-4h-3z" />
        <circle cx="112" cy="7" r="8" fill="#d9dd22" stroke="#5a9a1b" strokeWidth="2" />
        <path d="M132 13l3-8M138 13l3-8M144 13v-2M161 4v10" />
      </svg>
      <div className="mr-[12px] flex w-[102px] shrink-0 flex-col items-center text-[12px] leading-[18px]">
        <span>13:04</span>
        <span className="whitespace-nowrap">2020/2/17 星期一</span>
      </div>
      <span className="absolute right-1 top-0 h-full w-px bg-[#666]" />
    </div>
  );
}

export default function App() {
  return (
    <div className="relative flex h-screen flex-col overflow-hidden">
      <Wallpaper />
      <div className="relative flex min-h-0 flex-1 flex-col pb-[7px] pl-[7px] pr-[10px] pt-[2px]">
        <AppWindow />
      </div>
      <Taskbar />

      <div className="absolute left-[424px] top-[151px] whitespace-nowrap border-l-[6px] border-[#f5cf1c] bg-[#05080b] pl-[26px] pr-[25px] font-['Noto_Sans_CJK_SC',sans-serif] text-[42px] leading-[83px] text-white">
        点击左侧工具栏中“直线”图标
      </div>

      <div className="absolute -right-[14px] top-[408px] flex h-7 w-7 items-center rounded-full border-2 border-[#d5e8d5] bg-[#2fae4b] pl-[2px] text-[9px] italic text-white">
        79
      </div>

      <div className="absolute bottom-[18px] right-[71px] flex h-[115px] w-[235px] items-center gap-[17px] bg-[#222f55] pl-[14px] text-[#c8ccd4]">
        <svg viewBox="0 0 47 50" className="h-[50px] w-[47px] shrink-0" fill="none" stroke="currentColor" strokeWidth="4">
          <path d="M3 10v28c0 8 6 11 13 8l24-15c6-4 6-10 0-14L19 4c-5-4-9-1-9 4v26c0 4 3 6 8 4" />
          <path d="M18 18v11l9-5.500z" fill="currentColor" stroke="none" />
          <path d="M31 19v9" strokeWidth="2" />
        </svg>
        <div className="flex flex-col whitespace-nowrap">
          <div className="flex gap-1 font-['Liberation_Sans','Noto_Sans_CJK_SC',sans-serif] text-[33px] font-bold leading-9">
            {[..."溜溜自学"].map((char, i) => <span key={i}>{char}</span>)}
          </div>
          <span className="font-['DejaVu_Sans',sans-serif] text-[17px] leading-5">zixue.3D66.COM</span>
        </div>
      </div>
    </div>
  );
}
